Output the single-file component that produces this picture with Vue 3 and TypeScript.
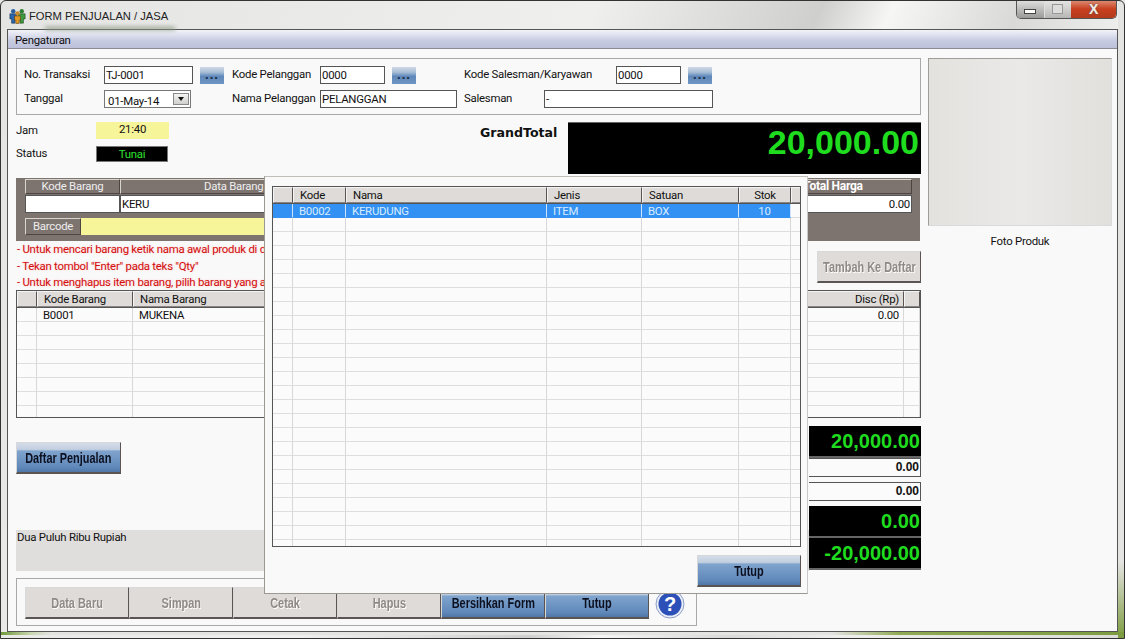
<script setup lang="ts">
interface Col {
  label: string
  width: number
  align?: string
}

const mainCols: Col[] = [
  { label: '', width: 20 },
  { label: 'Kode Barang', width: 96 },
  { label: 'Nama Barang', width: 600 },
  { label: 'Disc (Rp)', width: 171, align: 'right' },
  { label: '', width: 16 },
]
const mainRows: string[][] = [['', 'B0001', 'MUKENA', '0.00', '']]

const popupCols: Col[] = [
  { label: '', width: 20 },
  { label: 'Kode', width: 53 },
  { label: 'Nama', width: 201 },
  { label: 'Jenis', width: 95 },
  { label: 'Satuan', width: 97 },
  { label: 'Stok', width: 52, align: 'center' },
  { label: '', width: 10 },
]
const popupRows: string[][] = [['', 'B0002', 'KERUDUNG', 'ITEM', 'BOX', '10', '']]

const fill = (rows: string[][], cols: Col[], total: number): string[][] => {
  const out = [...rows]
  while (out.length < total) out.push(cols.map(() => ''))
  return out
}

const mainBody = fill(mainRows, mainCols, 8)
const popupBody = fill(popupRows, popupCols, 25)

const notes = [
  '- Untuk mencari barang ketik nama awal produk di daftar barang',
  '- Tekan tombol "Enter" pada teks "Qty"',
  '- Untuk menghapus item barang, pilih barang yang akan dihapus',
]

const actions = [
  { label: 'Data Baru', on: false },
  { label: 'Simpan', on: false },
  { label: 'Cetak', on: false },
  { label: 'Hapus', on: false },
  { label: 'Bersihkan Form', on: true },
  { label: 'Tutup', on: true },
]
</script>

<template>
  <div class="window">
    <header class="titlebar">
      <svg class="app-icon" width="17" height="17" viewBox="0 0 20 20">
        <circle cx="5" cy="5" r="2.6" fill="#2a5f9e" />
        <circle cx="15" cy="5" r="2.6" fill="#2f7f35" />
        <path d="M1 8h8v6H7v5H3v-5H1z" fill="#2a66ad" stroke="#17263c" stroke-width=".6" />
        <path d="M11 8h8v6h-2v5h-4v-5h-2z" fill="#3f9a40" stroke="#17351c" stroke-width=".6" />
        <circle cx="10" cy="7.5" r="2.6" fill="#c98a2b" />
        <path d="M6.5 10.5h7v5h-1.500v4h-4v-4h-1.500z" fill="#e39a22" stroke="#4a2f10" stroke-width=".6" />
      </svg>
      <span class="title-text">FORM PENJUALAN / JASA</span>
      <div class="controls">
        <span class="ctl"><i class="min"></i></span>
        <span class="ctl"><i class="max"></i></span>
        <span class="ctl close">X</span>
      </div>
    </header>

    <div class="client">
      <nav class="menubar">Pengaturan</nav>
      <div class="body">
        <main class="main">
          <section class="fieldset top-form">
            <div class="form-row">
              <label class="l-trans">No. Transaksi</label>
              <span class="input w-trans">TJ-0001</span>
              <button class="dots d1">...</button>
              <label class="l-pel">Kode Pelanggan</label>
              <span class="input w-code">0000</span>
              <button class="dots d2">...</button>
              <label class="l-sales">Kode Salesman/Karyawan</label>
              <span class="input w-code2">0000</span>
              <button class="dots d3">...</button>
            </div>
            <div class="form-row second">
              <label class="l-trans">Tanggal</label>
              <span class="input combo">01-May-14<i class="arrow"></i></span>
              <label class="l-nama">Nama Pelanggan</label>
              <span class="input w-nama">PELANGGAN</span>
              <label class="l-sm">Salesman</label>
              <span class="input w-sm">-</span>
            </div>
          </section>

          <section class="status-row">
            <div class="status-left">
              <div class="status-line">
                <label>Jam</label>
                <span class="jam">21:40</span>
              </div>
              <div class="status-line next">
                <label>Status</label>
                <span class="tunai">Tunai</span>
              </div>
            </div>
            <div class="grand-label">GrandTotal</div>
            <div class="grand-value">20,000.00</div>
          </section>

          <section class="entry">
            <div class="entry-head">
              <span class="eh kode">Kode Barang</span>
              <span class="eh data">Data Barang</span>
              <span class="eh total">Total Harga</span>
            </div>
            <div class="entry-cells">
              <span class="ec kode"></span>
              <span class="ec data">KERU</span>
              <span class="ec total">0.00</span>
            </div>
            <div class="barcode">
              <span class="eh bar-label">Barcode</span>
              <span class="bar-input"></span>
            </div>
          </section>

          <section class="notes-row">
            <ul class="notes">
              <li v-for="n in notes" :key="n">{{ n }}</li>
            </ul>
            <button class="btn off add"><span class="btn-text">Tambah Ke Daftar</span></button>
          </section>

          <section class="grid main-grid">
            <div class="grid-head">
              <span
                v-for="(c, i) in mainCols"
                :key="i"
                class="hcell"
                :class="c.align"
                :style="{ width: c.width + 'px' }"
              >{{ c.label }}</span>
            </div>
            <div v-for="(r, ri) in mainBody" :key="ri" class="grid-row">
              <span
                v-for="(c, i) in mainCols"
                :key="i"
                class="cell"
                :class="c.align"
                :style="{ width: c.width + 'px' }"
              >{{ r[i] }}</span>
            </div>
          </section>

          <section class="lower">
            <div class="lower-left">
              <button class="btn on daftar"><span class="btn-text">Daftar Penjualan</span></button>
              <div class="terbilang">Dua Puluh Ribu Rupiah</div>
            </div>
            <div class="totals">
              <div class="tot black">20,000.00</div>
              <div class="tot white">0.00</div>
              <div class="tot white gap">0.00</div>
              <div class="tot black gap2">0.00</div>
              <div class="tot black last">-20,000.00</div>
            </div>
          </section>

          <section class="fieldset actions">
            <button
              v-for="a in actions"
              :key="a.label"
              class="btn action"
              :class="a.on ? 'on' : 'off'"
            ><span class="btn-text">{{ a.label }}</span></button>
            <svg class="help" width="30" height="30" viewBox="0 0 30 30">
              <circle cx="15" cy="15" r="14" fill="#e8edf8" stroke="#8d9ec4" />
              <circle cx="15" cy="15" r="11.500" fill="#2d50b8" />
              <text x="15" y="22" text-anchor="middle" class="help-q">?</text>
            </svg>
          </section>
        </main>

        <aside class="side">
          <div class="photo"></div>
          <div class="photo-label">Foto Produk</div>
        </aside>
      </div>
    </div>

    <div class="popup">
      <section class="grid popup-grid">
        <div class="grid-head">
          <span
            v-for="(c, i) in popupCols"
            :key="i"
            class="hcell"
            :class="c.align"
            :style="{ width: c.width + 'px' }"
          >{{ c.label }}</span>
        </div>
        <div
          v-for="(r, ri) in popupBody"
          :key="ri"
          class="grid-row"
          :class="{ selected: ri === 0 }"
        >
          <span
            v-for="(c, i) in popupCols"
            :key="i"
            class="cell"
            :class="c.align"
            :style="{ width: c.width + 'px' }"
          >{{ r[i] }}</span>
        </div>
      </section>
      <div class="popup-foot">
        <button class="btn on tutup"><span class="btn-text">Tutup</span></button>
      </div>
    </div>
  </div>
</template>

<style>
html,
body {
  margin: 0;
  background: #e6e6e4;
}
</style>

<style scoped>
.window {
  position: relative;
  width: 1125px;
  height: 639px;
  box-sizing: border-box;
  overflow: hidden;
  display: flex;
  flex-direction: column;
  border: 1px solid #333;
  border-radius: 6px 6px 0 0;
  background:
    linear-gradient(90deg, #6f9a3a 0, #c9d6b0 30px, #e4e4e2 50px, #e4e4e2 74%, #8faa52 80%, #7d9c3f 100%) 0 631px / 100% 3px no-repeat,
    linear-gradient(#e4e4e2, #e4e4e2 88%, #7d9c3f) 1117px 0 / 7px 100% no-repeat,
    linear-gradient(115deg, #e4e4e2 0, #efefed 42%, #cfcfcd 58%, #f6f6f4 63%, #d9d9d7 72%, #efefed 80%, #dcdcda 100%);
  font-family: Roboto, 'Liberation Sans', Arial, sans-serif;
  font-size: 11.4px;
  letter-spacing: -0.25px;
  color: #111;
}
.titlebar {
  height: 28px;
  flex: none;
  display: flex;
  align-items: center;
  padding-left: 8px;
  position: relative;
}
.titlebar::after {
  content: '';
  position: absolute;
  left: 44px;
  bottom: -1px;
  width: 130px;
  height: 3px;
  background: #8c9a84;
  filter: blur(2px);
}
.app-icon {
  margin-right: 3px;
  margin-top: 1px;
}
.title-text {
  font-family: 'Liberation Sans', Arial, sans-serif;
  font-size: 11.2px;
  letter-spacing: 0;
  color: #222;
  margin-top: 1px;
}
.controls {
  position: absolute;
  top: -1px;
  right: 7px;
  width: 101px;
  height: 19px;
  display: flex;
  border: 1px solid #555;
  border-top: none;
  border-radius: 0 0 5px 5px;
  overflow: hidden;
  box-sizing: border-box;
}
.ctl {
  flex: 1;
  display: flex;
  align-items: center;
  justify-content: center;
  background: linear-gradient(#e2e2e0, #bdbdbb 50%, #9a9a98);
  border-right: 1px solid #ddd;
}
.ctl:nth-child(2) {
  background: linear-gradient(#e6e6e4, #d0d0ce 50%, #b5b5b3);
  border-right: none;
}
.ctl .min {
  width: 10px;
  height: 3px;
  margin-top: 5px;
  background: #fff;
  border: 1px solid #444;
}
.ctl .max {
  width: 9px;
  height: 8px;
  border: 1px solid #999;
  background: #ddd;
}
.ctl.close {
  flex: none;
  width: 45px;
  border: none;
  background: linear-gradient(#e0917a, #c8401f 50%, #b23a1c);
  color: #f4ece8;
  font-family: 'Liberation Sans', sans-serif;
  font-weight: bold;
  font-size: 14px;
  text-shadow: 0 0 2px #555;
}
.client {
  margin: 0 6px;
  height: 603px;
  flex: none;
  display: flex;
  flex-direction: column;
  background: #f9f9f9;
  border: 1px solid #555;
  box-sizing: border-box;
}
.menubar {
  height: 19px;
  flex: none;
  box-sizing: border-box;
  padding: 3px 7px;
  background: linear-gradient(#f2f3f8, #c7cbe2 60%, #bcc0da);
  border-bottom: 1px solid #8b8b92;
}
.body {
  flex: 1;
  display: flex;
  min-height: 0;
}
.main {
  width: 905px;
  margin-left: 8px;
  padding-top: 9px;
  flex: none;
}
label {
  display: block;
  flex: none;
}
.fieldset {
  border: 1px solid #a8a8a8;
  box-sizing: border-box;
}
.top-form {
  height: 57px;
  padding-top: 7px;
}
.form-row {
  display: flex;
  align-items: center;
  height: 18px;
}
.form-row.second {
  margin-top: 6px;
}
.form-row label {
  margin-top: -2px;
}
.input {
  box-sizing: border-box;
  height: 18px;
  line-height: 16px;
  border: 1px solid #555;
  background: #fff;
  padding-left: 1px;
  flex: none;
}
.l-trans {
  width: 80px;
  margin-left: 7px;
}
.w-trans {
  width: 89px;
}
.dots {
  width: 24px;
  height: 17px;
  padding: 0;
  margin-left: 7px;
  border: none;
  font: bold 13px 'Liberation Sans', sans-serif;
  letter-spacing: 1px;
  line-height: 14px;
  color: #1b2a44;
  background: linear-gradient(#cfd8e4 0, #a9bfd8 30%, #5f88ba 55%, #6f95c2);
  flex: none;
}
.l-pel {
  margin-left: 8px;
  width: 88px;
}
.w-code {
  width: 65px;
}
.l-sales {
  margin-left: 48px;
  width: 152px;
}
.w-code2 {
  width: 65px;
}
.combo {
  width: 87px;
  position: relative;
  padding-left: 3px;
  border-color: #777;
  overflow: hidden;
  line-height: 21px;
}
.arrow {
  position: absolute;
  right: 1px;
  top: 2px;
  width: 16px;
  height: 12px;
  background: linear-gradient(#f4f4f2, #cfcfcd);
  border: 1px solid #888;
  box-sizing: border-box;
}
.arrow::after {
  content: '';
  position: absolute;
  left: 4px;
  top: 3px;
  border-left: 3.500px solid transparent;
  border-right: 3.500px solid transparent;
  border-top: 4px solid #111;
}
.l-nama {
  margin-left: 41px;
  width: 88px;
}
.w-nama {
  width: 137px;
}
.l-sm {
  margin-left: 7px;
  width: 80px;
}
.w-sm {
  width: 169px;
}
.status-row {
  display: flex;
  height: 52px;
  margin-top: 7px;
}
.status-left {
  width: 464px;
  flex: none;
}
.status-line {
  display: flex;
  align-items: center;
}
.status-line.next {
  margin-top: 7px;
}
.status-line label {
  width: 80px;
  margin-top: -2px;
}
.jam {
  width: 73px;
  height: 17px;
  line-height: 14px;
  background: #f7f59a;
  text-align: center;
}
.tunai {
  width: 72px;
  height: 16px;
  box-sizing: border-box;
  line-height: 15px;
  background: #000;
  border: 1px solid #777;
  color: #2ee02e;
  text-align: center;
}
.grand-label {
  width: 88px;
  flex: none;
  font: bold 12.600px 'DejaVu Sans', sans-serif;
  letter-spacing: 0;
  padding-top: 3px;
}
.grand-value {
  flex: 1;
  background: #000;
  border-top: 1px solid #666;
  color: #1fdc1f;
  font-family: 'Liberation Sans', sans-serif;
  font-size: 34px;
  font-weight: bold;
  letter-spacing: 0;
  text-align: right;
  line-height: 38px;
  padding-right: 2px;
  box-sizing: border-box;
}
.entry {
  height: 63px;
  width: 904px;
  margin-top: 4px;
  background: #7d7470;
  box-sizing: border-box;
  padding: 1px 8px 0 9px;
  position: relative;
}
.entry-head,
.entry-cells {
  display: flex;
}
.eh {
  box-sizing: border-box;
  height: 15px;
  line-height: 13px;
  border: 1px solid #d8d4d0;
  border-right-color: #4c4542;
  border-bottom-color: #4c4542;
  color: #eee;
  text-align: center;
  background: #7d7470;
}
.kode {
  width: 95px;
}
.data {
  width: 634px;
}
.total {
  width: 158px;
}
.eh.data {
  text-align: left;
  padding-left: 83px;
}
.eh.total {
  font-weight: bold;
  font-size: 12px;
  color: #fff;
}
.ec {
  box-sizing: border-box;
  height: 18px;
  line-height: 16px;
  margin-top: 1px;
  background: #fff;
  border: 1px solid #555;
  padding: 0 1px;
}
.ec.total {
  text-align: right;
}
.barcode {
  display: flex;
  margin-top: 5px;
}
.bar-label {
  width: 56px;
  height: 17px;
  line-height: 15px;
  flex: none;
}
.bar-input {
  flex: 1;
  height: 17px;
  background: #f7f59a;
  margin-right: 200px;
}
.notes-row {
  height: 49px;
  display: flex;
  justify-content: space-between;
}
.notes {
  list-style: none;
  margin: 0;
  padding: 0 0 0 1px;
  color: #d30d0d;
  line-height: 16.500px;
  text-shadow: 0 0 2px #f7c4c4;
}
.btn {
  display: flex;
  align-items: center;
  justify-content: center;
  box-sizing: border-box;
  padding: 0;
  border: 1px solid #d8d8d8;
  border-right-color: #5a5552;
  border-bottom: 2px solid #5a5552;
  font-family: 'Liberation Sans', sans-serif;
  font-weight: bold;
  font-size: 14px;
  letter-spacing: 0;
}
.btn-text {
  display: inline-block;
  flex: none;
  white-space: nowrap;
  transform: scaleX(0.78);
}
.btn.on {
  color: #0c1020;
  background: linear-gradient(#d4dce8 0, #c2cfe0 22%, #7fa3cc 28%, #5f88ba 85%, #4f76a6);
}
.btn.off {
  color: #8f8a86;
  background: #dedbd8;
  text-shadow: 1px 1px 0 #fff;
}
.add {
  width: 104px;
  height: 32px;
  margin-top: 10px;
}
.grid {
  border: 1px solid #555;
  box-sizing: border-box;
  overflow: hidden;
  background: #fbfbfb;
}
.main-grid {
  height: 128px;
}
.grid-head {
  display: flex;
  height: 17px;
  box-sizing: border-box;
  border-bottom: 1px solid #555;
}
.hcell {
  box-sizing: border-box;
  height: 16px;
  line-height: 15px;
  padding: 0 6px;
  background: #dedbd8;
  border: 1px solid #f4f4f4;
  border-right-color: #5a5552;
  border-bottom-color: #8a8582;
  flex: none;
}
.grid-row {
  display: flex;
  height: 14px;
  box-sizing: border-box;
}
.cell {
  box-sizing: border-box;
  height: 14px;
  line-height: 15px;
  padding: 0 6px;
  border-right: 1px solid #d8d8d8;
  border-bottom: 1px solid #dedede;
  flex: none;
  white-space: nowrap;
}
.right {
  text-align: right;
  padding-right: 4px;
}
.center {
  text-align: center;
}
.grid-row.selected .cell {
  background: #3391f4;
  color: #d8ecff;
  border-bottom-color: #3391f4;
  border-right-color: #cfe4fb;
}
.grid-row.selected .cell:last-child {
  background: #fbfbfb;
  border-bottom-color: #dedede;
  border-right-color: #d8d8d8;
}
.lower {
  display: flex;
  height: 160px;
  align-items: flex-start;
}
.lower-left {
  width: 793px;
  flex: none;
  padding-top: 24px;
}
.daftar {
  width: 105px;
  height: 32px;
}
.terbilang {
  height: 41px;
  margin-top: 56px;
  background: #e0dedc;
  padding-left: 1px;
}
.totals {
  width: 112px;
  flex: none;
  margin-top: 8px;
}
.tot {
  box-sizing: border-box;
  text-align: right;
  font-family: 'Liberation Sans', sans-serif;
  font-weight: bold;
  letter-spacing: 0;
  padding-right: 1px;
}
.tot.black {
  height: 32px;
  background: #000;
  border-bottom: 2px solid #666;
  color: #1fdc1f;
  font-size: 20px;
  line-height: 30px;
}
.tot.white {
  height: 19px;
  background: #fbfbfb;
  border: 1px solid #555;
  border-left: none;
  font-size: 12px;
  line-height: 17px;
  color: #111;
}
.tot.gap {
  margin-top: 5px;
}
.tot.gap2 {
  margin-top: 5px;
}
.tot.last {
  height: 32px;
}
.actions {
  width: 681px;
  height: 48px;
  display: flex;
  align-items: flex-start;
  padding: 8px 0 0 8px;
  position: relative;
}
.action {
  width: 104px;
  height: 32px;
}
.help {
  margin: 2px 0 0 6px;
  flex: none;
}
.help-q {
  font: bold 20px 'Liberation Sans', sans-serif;
  fill: #fff;
}
.side {
  width: 184px;
  margin-left: 7px;
  padding-top: 9px;
  flex: none;
}
.photo {
  height: 168px;
  box-sizing: border-box;
  background: linear-gradient(90deg, #e4e2df, #ebe9e7 50%, #e2e0dd);
  border: 1px solid #a09c98;
  border-right-color: #dadada;
  border-bottom-color: #dadada;
}
.photo-label {
  margin-top: 8px;
  text-align: center;
}
.popup {
  position: absolute;
  left: 263px;
  top: 175px;
  width: 544px;
  height: 418px;
  box-sizing: border-box;
  background: #f9f9f9;
  border: 1px solid #9c9893;
  border-top-color: #c2bfbb;
  border-right-color: #c8c8c8;
  padding: 9px 7px 0 7px;
}
.popup-grid {
  height: 361px;
  width: 529px;
}
.popup-foot {
  display: flex;
  justify-content: flex-end;
  margin-top: 8px;
  width: 529px;
}
.tutup {
  width: 104px;
  height: 32px;
}
</style>
